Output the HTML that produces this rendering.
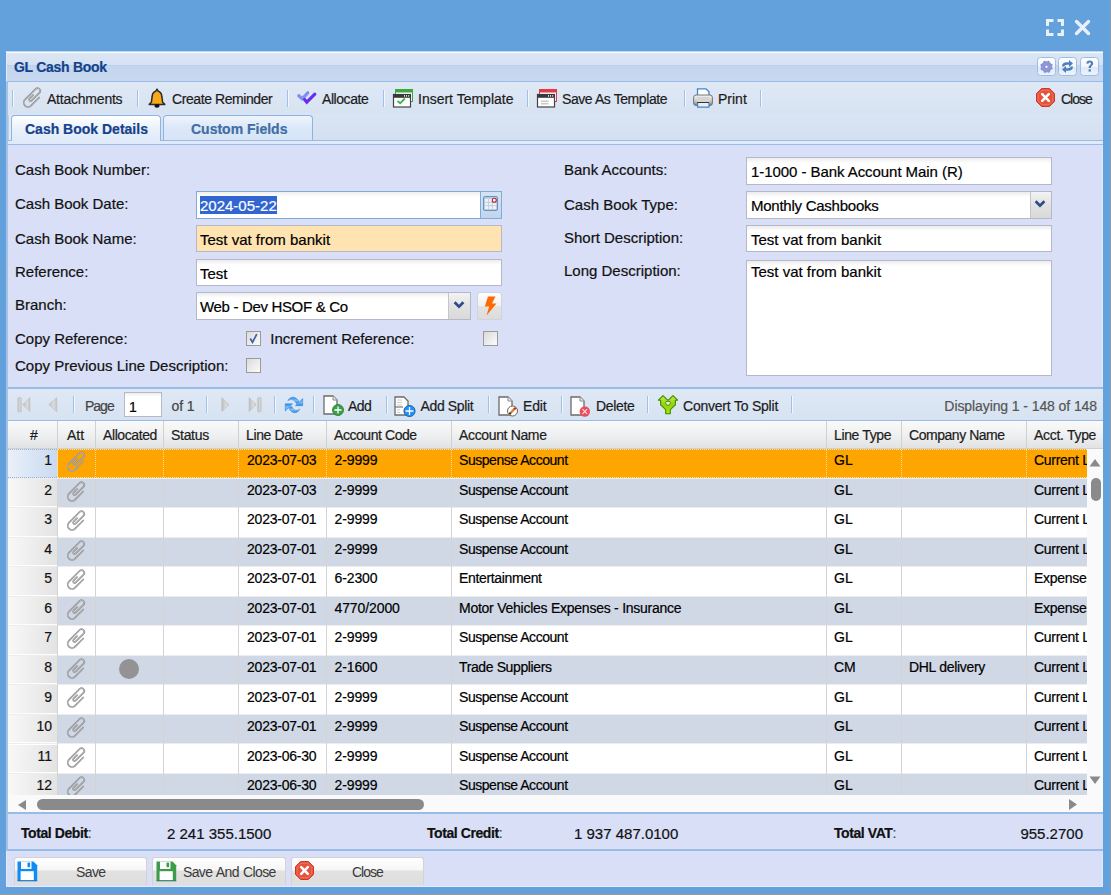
<!DOCTYPE html><html><head><meta charset="utf-8"><style>
*{box-sizing:border-box}
html,body{margin:0;padding:0}
body{width:1111px;height:895px;overflow:hidden;background:#62a1dc;font-family:"Liberation Sans",sans-serif;position:relative}
.a{position:absolute}
.t{position:absolute;white-space:nowrap;line-height:1;-webkit-text-stroke:0.2px currentColor}
svg.a{overflow:visible}
</style></head><body><div class="a" style="left:1110px;top:0px;width:1px;height:895px;background:#8f9aa6"></div>
<div class="a" style="left:0px;top:894px;width:1111px;height:1px;background:#9a9a9a"></div>
<svg class="a" style="left:1045px;top:18px" width="20" height="19" viewBox="0 0 20 19"><g fill="none" stroke="#e8f0f9" stroke-width="3" stroke-linecap="butt"><path d="M2.5 8V2.5H8.5"/><path d="M12.5 2.5H17.5V8"/><path d="M2.5 11.5V16.5H8.5"/><path d="M12.5 16.5H17.5V11.5"/></g></svg>
<svg class="a" style="left:1074px;top:19px" width="17" height="17" viewBox="0 0 17 17"><g stroke="#e8f0f9" stroke-width="3.4" stroke-linecap="round"><path d="M2.5 2.5L14.5 14.5M14.5 2.5L2.5 14.5"/></g></svg>
<div class="a" style="left:6px;top:51px;width:1097px;height:836px;background:#d8dff6;border-left:2px solid #a6c1e6;border-right:1px solid #e2e8f8;border-bottom:1px solid #e6ebfa"></div>
<div class="a" style="left:6px;top:51px;width:1097px;height:31px;background:linear-gradient(#b9d5f1 0,#b9d5f1 1px,#fbfdff 1px,#fbfdff 2px,#dbe6f4 2px,#d5e2f3 14px,#bcd2ec 14px,#bcd2ec 15px,#c3d6ee 15px,#c8d9ef 30px);border-bottom:1px solid #99bbe8;border-left:1px solid #e2ebf7"></div>
<div class="t" style="left:14px;top:60.15px;font-size:14px;font-weight:700;color:#15428b;letter-spacing:-0.29px;">GL Cash Book</div>
<svg width="0" height="0" style="position:absolute"><defs><linearGradient id="tg" x1="0" y1="0" x2="0" y2="1"><stop offset="0" stop-color="#fff"/><stop offset="0.5" stop-color="#f2f7fd"/><stop offset="0.52" stop-color="#dde9f8"/><stop offset="1" stop-color="#eef4fc"/></linearGradient></defs></svg>
<svg class="a" style="left:1037px;top:57px" width="19" height="19" viewBox="0 0 19 19"><rect x="0.5" y="0.5" width="18" height="18" rx="3" fill="url(#tg)" stroke="#9dbde8"/><g transform="translate(9.5 9.8)"><circle r="5.3" fill="#8e96d5" stroke="#7a82c8" stroke-width="0.6"/><circle r="5.6" fill="none" stroke="#7f87cc" stroke-width="1.4" stroke-dasharray="1.6 2.8" transform="rotate(8)"/><circle r="1.1" fill="#fff"/></g></svg>
<svg class="a" style="left:1058px;top:57px" width="19" height="19" viewBox="0 0 19 19"><rect x="0.5" y="0.5" width="18" height="18" rx="3" fill="url(#tg)" stroke="#9dbde8"/><g fill="#4d7fbf"><path d="M4 9.5C4 6.5 6 5.3 9 5.3H11V3L15 6.5L11 10V7.8H9C7.5 7.8 6.5 8.5 6.5 9.5Z"/><path d="M15 9.5C15 12.5 13 13.7 10 13.7H8V16L4 12.5L8 9V11.2H10C11.5 11.2 12.5 10.5 12.5 9.5Z"/></g></svg>
<svg class="a" style="left:1080px;top:57px" width="19" height="19" viewBox="0 0 19 19"><rect x="0.5" y="0.5" width="18" height="18" rx="3" fill="url(#tg)" stroke="#9dbde8"/><path d="M6.3 6.6C6.3 4.6 7.7 3.6 9.7 3.6C11.8 3.6 13.2 4.7 13.2 6.5C13.2 8.6 10.8 8.9 10.8 11H8.6C8.6 8.3 10.9 8.1 10.9 6.6C10.9 5.9 10.4 5.5 9.7 5.5C9 5.5 8.5 6 8.5 6.8Z" fill="#4f7fb8"/><rect x="8.6" y="12.3" width="2.2" height="2.3" fill="#4f7fb8"/></svg>
<div class="a" style="left:8px;top:82px;width:1095px;height:32px;background:linear-gradient(#dfe8f5,#d7e3f2)"></div>
<div class="a" style="left:12px;top:90px;width:1px;height:17px;background:#9fc0e8;box-shadow:1px 0 0 #f4f8fd"></div>
<div class="a" style="left:137px;top:90px;width:1px;height:17px;background:#9fc0e8;box-shadow:1px 0 0 #f4f8fd"></div>
<div class="a" style="left:287px;top:90px;width:1px;height:17px;background:#9fc0e8;box-shadow:1px 0 0 #f4f8fd"></div>
<div class="a" style="left:383px;top:90px;width:1px;height:17px;background:#9fc0e8;box-shadow:1px 0 0 #f4f8fd"></div>
<div class="a" style="left:527px;top:90px;width:1px;height:17px;background:#9fc0e8;box-shadow:1px 0 0 #f4f8fd"></div>
<div class="a" style="left:684px;top:90px;width:1px;height:17px;background:#9fc0e8;box-shadow:1px 0 0 #f4f8fd"></div>
<div class="a" style="left:760px;top:90px;width:1px;height:17px;background:#9fc0e8;box-shadow:1px 0 0 #f4f8fd"></div>
<div class="t" style="left:47px;top:92.15px;font-size:14px;font-weight:400;color:#1c1c1c;letter-spacing:-0.22px;">Attachments</div>
<div class="t" style="left:172px;top:92.15px;font-size:14px;font-weight:400;color:#1c1c1c;letter-spacing:-0.42px;">Create Reminder</div>
<div class="t" style="left:322px;top:92.15px;font-size:14px;font-weight:400;color:#1c1c1c;letter-spacing:-0.43px;">Allocate</div>
<div class="t" style="left:418px;top:92.15px;font-size:14px;font-weight:400;color:#1c1c1c;">Insert Template</div>
<div class="t" style="left:562px;top:92.15px;font-size:14px;font-weight:400;color:#1c1c1c;letter-spacing:-0.42px;">Save As Template</div>
<div class="t" style="left:718px;top:92.15px;font-size:14px;font-weight:400;color:#1c1c1c;">Print</div>
<div class="t" style="left:1061px;top:92.15px;font-size:14px;font-weight:400;color:#1c1c1c;letter-spacing:-1.0px;">Close</div>
<svg class="a" style="left:22px;top:88px" width="19" height="20" viewBox="0 0 19 20"><g transform="translate(10.6 10.2) rotate(45) translate(-5 -12)" fill="none" stroke-linecap="round"><path d="M3.2 9.5V14.5A1.4 1.4 0 0 0 6.0 14.5V3.4A2.7 2.7 0 0 0 0.6 3.4V18.35A4.3 4.3 0 0 0 9.2 18.35V6.8" stroke="#8a8a8a" stroke-width="1.7"/><path d="M3.2 9.5V14.5A1.4 1.4 0 0 0 6.0 14.5V3.4A2.7 2.7 0 0 0 0.6 3.4V18.35A4.3 4.3 0 0 0 9.2 18.35V6.8" stroke="#d0d0d0" stroke-width="0.55"/></g></svg>
<svg class="a" style="left:148px;top:88px" width="18" height="20" viewBox="0 0 18 20"><path d="M9 1.2L10.2 3.2C12.6 3.8 13.6 5.5 13.8 8.2L14.6 14.2L16.8 16.4H1.2L3.4 14.2L4.2 8.2C4.4 5.5 5.4 3.8 7.8 3.2Z" fill="#f7a91a" stroke="#2a2a2a" stroke-width="1.5" stroke-linejoin="round"/><ellipse cx="9" cy="18" rx="2.6" ry="1.8" fill="#111"/></svg>
<svg class="a" style="left:297px;top:91px" width="20" height="14" viewBox="0 0 20 14"><g fill="none" stroke-linecap="round" stroke-width="3.2"><path d="M1.8 4.8L5.2 7.8L10.8 1.8" stroke="#7e8ff0"/><path d="M7.6 8.5L9.8 11.2L17.8 3.2" stroke="#6a2cf0"/></g></svg>
<svg class="a" style="left:393px;top:89px" width="20" height="19" viewBox="0 0 20 19"><rect x="2.5" y="0.5" width="17" height="12" fill="#fff" stroke="#3aa83a" stroke-width="1"/><rect x="2" y="0" width="18" height="3.5" fill="#3aa83a"/><rect x="0.5" y="5.5" width="17" height="12.5" fill="#fff" stroke="#444" stroke-width="1.2"/><rect x="0" y="5" width="18" height="3.8" fill="#3a3a3a"/><g fill="#fff"><rect x="11" y="6.2" width="1" height="1.4"/><rect x="13" y="6.2" width="1" height="1.4"/><rect x="15.2" y="6.2" width="1" height="1.4"/></g><path d="M4.5 12L7.2 14.3L11.8 9.5" fill="none" stroke="#3cb54a" stroke-width="1.9"/></svg>
<svg class="a" style="left:537px;top:89px" width="20" height="19" viewBox="0 0 20 19"><rect x="2.5" y="0.5" width="17" height="12" fill="#fff" stroke="#e23a45" stroke-width="1"/><rect x="2" y="0" width="18" height="3.5" fill="#e23a45"/><rect x="0.5" y="5.5" width="17" height="12.5" fill="#fff" stroke="#444" stroke-width="1.2"/><rect x="0" y="5" width="18" height="3.8" fill="#3a3a3a"/><g fill="#fff"><rect x="11" y="6.2" width="1" height="1.4"/><rect x="13" y="6.2" width="1" height="1.4"/><rect x="15.2" y="6.2" width="1" height="1.4"/></g><g stroke="#bdbdbd" stroke-width="1.2"><path d="M4 12.2H11.5"/><path d="M4 14.8H11.5"/></g></svg>
<svg class="a" style="left:693px;top:88px" width="20" height="20" viewBox="0 0 20 20"><defs><linearGradient id="pg" x1="0" y1="0" x2="0" y2="1"><stop offset="0" stop-color="#f4f4f4"/><stop offset="0.6" stop-color="#c8c8c8"/><stop offset="1" stop-color="#777"/></linearGradient></defs><path d="M4.5 0.8H13L16 3.8V10H4.5Z" fill="#fff" stroke="#3f86d3" stroke-width="1.3"/><rect x="0.6" y="7" width="18.8" height="10.5" rx="2.5" fill="url(#pg)" stroke="#666" stroke-width="0.9"/><rect x="4" y="9" width="12" height="5" fill="#d5d5d5"/><path d="M4 14.5H16" stroke="#333" stroke-width="1"/><path d="M4.6 15L4.6 19.2H16L16 15" fill="#eee" stroke="#3f86d3" stroke-width="1.2"/></svg>
<svg class="a" style="left:1036px;top:88px" width="19" height="19" viewBox="0 0 19 19"><g transform="scale(1.0)"><path d="M5.6 0.5H13.4L18.5 5.6V13.4L13.4 18.5H5.6L0.5 13.4V5.6Z" fill="#e8503a" stroke="#c8392a" stroke-width="1"/><path d="M6.2 2.2H12.8L16.8 6.2V12.8L12.8 16.8H6.2L2.2 12.8V6.2Z" fill="none" stroke="#f08a78" stroke-width="0.8" opacity="0.8"/><path d="M6.2 6.2L12.8 12.8M12.8 6.2L6.2 12.8" stroke="#fff" stroke-width="2.6" stroke-linecap="round"/></g></svg>
<div class="a" style="left:8px;top:114px;width:1095px;height:26px;background:linear-gradient(#dae5f3,#d3e0f0)"></div>
<div class="a" style="left:8px;top:140px;width:1095px;height:1px;background:#99bbe8"></div>
<div class="a" style="left:8px;top:141px;width:1095px;height:3px;background:#e0eafa"></div>
<div class="a" style="left:8px;top:144px;width:1095px;height:1px;background:#99bbe8"></div>
<div class="a" style="left:8px;top:115px;width:3px;height:25px;background:#e2e9f2;border-left:1px solid #b9cfea"></div>
<div class="a" style="left:11px;top:115px;width:150px;height:26px;background:linear-gradient(#ffffff,#e8f0fa 14px,#dfeaf9 25px,#e0eafa);border:1px solid #8db2e3;border-bottom:none;border-radius:4px 4px 0 0"></div>
<div class="a" style="left:12px;top:140px;width:148px;height:1px;background:#e0eafa"></div>
<div class="a" style="left:163px;top:115px;width:150px;height:26px;background:linear-gradient(#eef4fc,#dae7f8 13px,#d7e5f7);border:1px solid #8db2e3;border-bottom:1px solid #99bbe8;border-radius:4px 4px 0 0"></div>
<div class="t" style="left:25px;top:122.15px;font-size:14px;font-weight:700;color:#15428b;">Cash Book Details</div>
<div class="t" style="left:191px;top:122.15px;font-size:14px;font-weight:700;color:#416da3;">Custom Fields</div>
<div class="t" style="left:15px;top:162.30px;font-size:15px;font-weight:400;color:#111;">Cash Book Number:</div>
<div class="t" style="left:15px;top:196.30px;font-size:15px;font-weight:400;color:#111;">Cash Book Date:</div>
<div class="t" style="left:15px;top:230.50px;font-size:15px;font-weight:400;color:#111;">Cash Book Name:</div>
<div class="t" style="left:15px;top:263.50px;font-size:15px;font-weight:400;color:#111;">Reference:</div>
<div class="t" style="left:15px;top:297.30px;font-size:15px;font-weight:400;color:#111;">Branch:</div>
<div class="t" style="left:15px;top:331.10px;font-size:15px;font-weight:400;color:#111;">Copy Reference:</div>
<div class="t" style="left:15px;top:358.00px;font-size:15px;font-weight:400;color:#111;">Copy Previous Line Description:</div>
<div class="t" style="left:564px;top:162.30px;font-size:15px;font-weight:400;color:#111;">Bank Accounts:</div>
<div class="t" style="left:564px;top:196.60px;font-size:15px;font-weight:400;color:#111;">Cash Book Type:</div>
<div class="t" style="left:564px;top:230.10px;font-size:15px;font-weight:400;color:#111;">Short Description:</div>
<div class="t" style="left:564px;top:262.80px;font-size:15px;font-weight:400;color:#111;">Long Description:</div>
<div class="t" style="left:270.3px;top:331.10px;font-size:15px;font-weight:400;color:#111;">Increment Reference:</div>
<div class="a" style="left:196px;top:191px;width:306px;height:28px;background:linear-gradient(#efefef 0,#fff 5px);border:1px solid #7eadd9"></div>
<div class="a" style="left:480px;top:192px;width:21px;height:26px;background:linear-gradient(#d5e3f4,#c2d5ee);border-left:1px solid #7eadd9"></div>
<svg class="a" style="left:483px;top:196px" width="15" height="15" viewBox="0 0 15 15"><rect x="0.5" y="0.5" width="14" height="14" rx="1.5" fill="#b9cde7" stroke="#6e8fb8"/><rect x="2" y="3" width="11" height="10" fill="#eef2f8"/><g stroke="#b8c4d6" stroke-width="0.8"><path d="M2 6.3H13M2 9.6H13M5.6 3V13M9.3 3V13"/></g><circle cx="11.3" cy="4.2" r="2" fill="#fff" stroke="#b0202a" stroke-width="1.1"/></svg>
<div class="a" style="left:200px;top:196px;width:77px;height:18px;background:#3165d2"></div>
<div class="t" style="left:200px;top:198.30px;font-size:15px;font-weight:400;color:#fff;">2024-05-22</div>
<div class="a" style="left:196px;top:225px;width:306px;height:27px;background:#ffe4b1;border:1px solid #b5b8c8"></div>
<div class="t" style="left:200px;top:231.80px;font-size:15px;font-weight:400;color:#000;">Test vat from bankit</div>
<div class="a" style="left:196px;top:259px;width:306px;height:27px;background:linear-gradient(#ececec 0,#fff 5px);border:1px solid #b5b8c8"></div>
<div class="t" style="left:200px;top:265.80px;font-size:15px;font-weight:400;color:#000;">Test</div>
<div class="a" style="left:196px;top:292px;width:275px;height:28px;background:linear-gradient(#ececec 0,#fff 5px);border:1px solid #b5b8c8"></div>
<div class="a" style="left:448px;top:293px;width:22px;height:26px;background:linear-gradient(#f3f3f3,#e2e2e2 50%,#d9d9d9);border-left:1px solid #c6c6c6"></div>
<svg class="a" style="left:452px;top:300px" width="14" height="10" viewBox="0 0 14 10"><path d="M2.6 2.2L7 6.6L11.4 2.2" fill="none" stroke="#2c4b88" stroke-width="2.7"/></svg>
<div class="t" style="left:200px;top:299.30px;font-size:15px;font-weight:400;color:#000;letter-spacing:-0.33px;">Web - Dev HSOF &amp; Co</div>
<div class="a" style="left:477px;top:292px;width:25px;height:28px;background:linear-gradient(#fdfdfd,#f1f1f1 50%,#e3e3e3 51%,#dcdcdc);border:1px solid #d0d3dc;border-radius:3px 3px 0 0"></div>
<svg class="a" style="left:481px;top:295px" width="17" height="22" viewBox="0 0 17 22"><path d="M7 1.5H14.5L11 8.5H15.5L5.5 20.5L8.2 11.5H3.8Z" fill="#ff6a00"/></svg>
<svg width="0" height="0" style="position:absolute"><defs><linearGradient id="cbg" x1="0" y1="0" x2="1" y2="1"><stop offset="0" stop-color="#d9d9d9"/><stop offset="1" stop-color="#fdfdfd"/></linearGradient></defs></svg>
<svg class="a" style="left:246px;top:331px" width="15" height="15" viewBox="0 0 15 15"><rect x="0.5" y="0.5" width="14" height="14" fill="url(#cbg)" stroke="#9a9a9a"/><path d="M4.2 7.5L6.5 11.2L10.8 3.2" fill="none" stroke="#3d5fa6" stroke-width="1.7"/></svg>
<svg class="a" style="left:483px;top:331px" width="15" height="15" viewBox="0 0 15 15"><rect x="0.5" y="0.5" width="14" height="14" fill="url(#cbg)" stroke="#9a9a9a"/></svg>
<svg class="a" style="left:246px;top:358px" width="15" height="15" viewBox="0 0 15 15"><rect x="0.5" y="0.5" width="14" height="14" fill="url(#cbg)" stroke="#9a9a9a"/></svg>
<div class="a" style="left:746px;top:157px;width:306px;height:28px;background:linear-gradient(#ececec 0,#fff 5px);border:1px solid #b5b8c8"></div>
<div class="t" style="left:751px;top:164.30px;font-size:15px;font-weight:400;color:#000;letter-spacing:-0.06px;">1-1000 - Bank Account Main (R)</div>
<div class="a" style="left:746px;top:191px;width:306px;height:28px;background:linear-gradient(#ececec 0,#fff 5px);border:1px solid #b5b8c8"></div>
<div class="a" style="left:1030px;top:192px;width:21px;height:26px;background:linear-gradient(#f3f3f3,#e2e2e2 50%,#d9d9d9);border-left:1px solid #c6c6c6"></div>
<svg class="a" style="left:1033px;top:199px" width="14" height="10" viewBox="0 0 14 10"><path d="M2.6 2.2L7 6.6L11.4 2.2" fill="none" stroke="#2c4b88" stroke-width="2.7"/></svg>
<div class="t" style="left:751px;top:198.30px;font-size:15px;font-weight:400;color:#000;letter-spacing:-0.25px;">Monthly Cashbooks</div>
<div class="a" style="left:746px;top:225px;width:306px;height:27px;background:linear-gradient(#ececec 0,#fff 5px);border:1px solid #b5b8c8"></div>
<div class="t" style="left:751px;top:231.80px;font-size:15px;font-weight:400;color:#000;">Test vat from bankit</div>
<div class="a" style="left:746px;top:260px;width:306px;height:116px;background:linear-gradient(#ececec 0,#fff 5px);border:1px solid #b5b8c8"></div>
<div class="t" style="left:751px;top:264.30px;font-size:15px;font-weight:400;color:#000;">Test vat from bankit</div>
<div class="a" style="left:8px;top:387px;width:1095px;height:2px;background:#99bbe8"></div>
<div class="a" style="left:8px;top:389px;width:1095px;height:32px;background:linear-gradient(#dfe8f5,#d7e3f2);border-bottom:1px solid #99bbe8"></div>
<div class="a" style="left:73px;top:396px;width:1px;height:17px;background:#9fc0e8;box-shadow:1px 0 0 #f4f8fd"></div>
<div class="a" style="left:206px;top:396px;width:1px;height:17px;background:#9fc0e8;box-shadow:1px 0 0 #f4f8fd"></div>
<div class="a" style="left:274px;top:396px;width:1px;height:17px;background:#9fc0e8;box-shadow:1px 0 0 #f4f8fd"></div>
<div class="a" style="left:313px;top:396px;width:1px;height:17px;background:#9fc0e8;box-shadow:1px 0 0 #f4f8fd"></div>
<div class="a" style="left:386px;top:396px;width:1px;height:17px;background:#9fc0e8;box-shadow:1px 0 0 #f4f8fd"></div>
<div class="a" style="left:488px;top:396px;width:1px;height:17px;background:#9fc0e8;box-shadow:1px 0 0 #f4f8fd"></div>
<div class="a" style="left:561px;top:396px;width:1px;height:17px;background:#9fc0e8;box-shadow:1px 0 0 #f4f8fd"></div>
<div class="a" style="left:647px;top:396px;width:1px;height:17px;background:#9fc0e8;box-shadow:1px 0 0 #f4f8fd"></div>
<div class="a" style="left:791px;top:396px;width:1px;height:17px;background:#9fc0e8;box-shadow:1px 0 0 #f4f8fd"></div>
<svg width="0" height="0" style="position:absolute"><defs><linearGradient id="pgr" x1="0" y1="0" x2="1" y2="0"><stop offset="0" stop-color="#bdbdbd"/><stop offset="0.6" stop-color="#dcdcdc"/><stop offset="1" stop-color="#c4c4c4"/></linearGradient></defs></svg>
<svg class="a" style="left:17px;top:397px" width="14" height="16" viewBox="0 0 14 16"><rect x="0.9" y="0.6" width="3.3" height="14.4" rx="0.9" fill="url(#pgr)" stroke="#b8b8b8" stroke-width="0.6"/><path d="M12.9 0.6V14.6L5.8 7.6Z" fill="url(#pgr)" stroke="#b6b6b6" stroke-width="0.5"/></svg>
<svg class="a" style="left:48px;top:397px" width="10" height="16" viewBox="0 0 10 16"><path d="M8.7 0.6V14.6L0.9 7.6Z" fill="url(#pgr)" stroke="#b6b6b6" stroke-width="0.5"/></svg>
<div class="t" style="left:85px;top:398.65px;font-size:14px;font-weight:400;color:#444;letter-spacing:-1.0px;">Page</div>
<div class="a" style="left:124px;top:392px;width:38px;height:25px;background:linear-gradient(#ececec 0,#fff 4px);border:1px solid #b5b8c8"></div>
<div class="t" style="left:129px;top:400.15px;font-size:14px;font-weight:400;color:#000;">1</div>
<div class="t" style="left:171.5px;top:398.65px;font-size:14px;font-weight:400;color:#444;letter-spacing:-0.09px;">of 1</div>
<svg class="a" style="left:221px;top:397px" width="10" height="16" viewBox="0 0 10 16"><path d="M0.8 0.6V14.6L7.9 7.6Z" fill="url(#pgr)" stroke="#b6b6b6" stroke-width="0.5"/></svg>
<svg class="a" style="left:248px;top:397px" width="14" height="16" viewBox="0 0 14 16"><path d="M1.1 0.6V14.6L8.2 7.6Z" fill="url(#pgr)" stroke="#b6b6b6" stroke-width="0.5"/><rect x="9.8" y="0.6" width="3.3" height="14.4" rx="0.9" fill="url(#pgr)" stroke="#b8b8b8" stroke-width="0.6"/></svg>
<svg class="a" style="left:282px;top:394px" width="24" height="22" viewBox="0 0 24 22"><defs><linearGradient id="rg" x1="0" y1="0" x2="0" y2="1"><stop offset="0" stop-color="#2a8ae6"/><stop offset="0.5" stop-color="#7cc0f6"/><stop offset="1" stop-color="#2a86e0"/></linearGradient></defs><g fill="url(#rg)" stroke="#2f86dc" stroke-width="0.5" stroke-linejoin="round"><path d="M5.8 6.8C7.5 2.2 14.5 1.2 17.6 8.6L14.2 9.6C12.6 5.4 8.6 4.6 5.8 6.8Z"/><path d="M13.4 11.7L20.7 11.7L20.7 4.6Z"/><path d="M17.8 15C16 19.8 9.5 20.5 6.5 13.4L9.8 12.4C11.5 16.6 15 17.4 17.8 15Z"/><path d="M3.2 9.8L10.6 9.8L3.2 17.1Z"/></g></svg>
<svg class="a" style="left:323px;top:395px" width="21" height="21" viewBox="0 0 21 21"><path d="M1 1H10L14 5V19H1Z" fill="#fff" stroke="#6b6b6b" stroke-width="1.3"/><path d="M10 1V5H14" fill="#eee" stroke="#8a8a8a" stroke-width="1"/><circle cx="15" cy="15" r="5.5" fill="#3aa048" stroke="#2a7a34" stroke-width="0.8"/><path d="M15 11.5V18.5M11.5 15H18.5" stroke="#fff" stroke-width="1.3"/></svg>
<div class="t" style="left:348px;top:398.65px;font-size:14px;font-weight:400;color:#1c1c1c;letter-spacing:-0.5px;">Add</div>
<svg class="a" style="left:394px;top:396px" width="22" height="21" viewBox="0 0 22 21"><path d="M1 1H10L14 5V19H1Z" fill="#fff" stroke="#6b6b6b" stroke-width="1.3"/><path d="M1 11H9" stroke="#6b6b6b" stroke-width="1.1"/><g stroke="#ccc" stroke-width="1"><path d="M3 4H8M3 6.5H8M3 9H8M3 14H6M3 16.5H6"/></g><circle cx="15.5" cy="15" r="5.6" fill="#1e90ff" stroke="#1a5d8a" stroke-width="0.9"/><path d="M15.5 11V19M11.5 15H19.5" stroke="#fff" stroke-width="1.3"/></svg>
<div class="t" style="left:420.5px;top:398.65px;font-size:14px;font-weight:400;color:#1c1c1c;letter-spacing:-0.36px;">Add Split</div>
<svg class="a" style="left:498px;top:396px" width="21" height="21" viewBox="0 0 21 21"><path d="M1 1H10L14 5V19H1Z" fill="#fff" stroke="#6b6b6b" stroke-width="1.3"/><path d="M10 1V5H14" fill="#eee" stroke="#8a8a8a" stroke-width="1"/><circle cx="14.5" cy="15" r="5" fill="#fff" stroke="#7a5a5a" stroke-width="1"/><path d="M11.8 17.8L16.8 12.6" stroke="#c08a2a" stroke-width="2.2"/><path d="M16.2 13.2L17.6 11.8" stroke="#e02020" stroke-width="2.2"/><path d="M11.6 18L12.6 16.8" stroke="#222" stroke-width="2"/></svg>
<div class="t" style="left:523px;top:398.65px;font-size:14px;font-weight:400;color:#1c1c1c;letter-spacing:-0.15px;">Edit</div>
<svg class="a" style="left:570px;top:396px" width="21" height="21" viewBox="0 0 21 21"><path d="M1 1H10L14 5V19H1Z" fill="#fff" stroke="#6b6b6b" stroke-width="1.3"/><path d="M10 1V5H14" fill="#eee" stroke="#8a8a8a" stroke-width="1"/><circle cx="14.8" cy="15.5" r="5.2" fill="#e8505a"/><path d="M12.5 13.2L17.1 17.8M17.1 13.2L12.5 17.8" stroke="#fde" stroke-width="1.1"/></svg>
<div class="t" style="left:596px;top:398.65px;font-size:14px;font-weight:400;color:#1c1c1c;letter-spacing:-0.34px;">Delete</div>
<svg class="a" style="left:658px;top:395px" width="20" height="20" viewBox="0 0 20 20"><defs><linearGradient id="yg" x1="0" y1="0" x2="0" y2="1"><stop offset="0" stop-color="#c2e85a"/><stop offset="0.5" stop-color="#94d400"/><stop offset="1" stop-color="#a6ea00"/></linearGradient></defs><path d="M5 0.6L9.9 5.3L10 5.3L15 0.6L19.6 5.2H17.4V9.8L12.3 14.6V18.8H7.7V14.6L2.6 9.8V5.2H0.4Z" fill="url(#yg)" stroke="#3f8a00" stroke-width="1.1" stroke-linejoin="round"/><path d="M10 10.6C8.2 9.4 7.6 8.6 7.6 7.7C7.6 6.9 8.2 6.4 8.9 6.4C9.4 6.4 9.8 6.7 10 7C10.2 6.7 10.6 6.4 11.1 6.4C11.8 6.4 12.4 6.9 12.4 7.7C12.4 8.6 11.8 9.4 10 10.6Z" fill="#e3ebf4" stroke="#3f8a00" stroke-width="1"/></svg>
<div class="t" style="left:683px;top:398.65px;font-size:14px;font-weight:400;color:#1c1c1c;letter-spacing:-0.22px;">Convert To Split</div>
<div class="t" style="right:14px;top:398.65px;font-size:14px;font-weight:400;color:#555;letter-spacing:-0.09px;">Displaying 1 - 148 of 148</div>
<div class="a" style="left:8px;top:421px;width:1095px;height:28px;background:linear-gradient(#fafafa,#eeeff0 55%,#e1e2e4);border-bottom:1px solid #d0d0d0"></div>
<div class="a" style="left:57px;top:421px;width:1px;height:28px;background:#d0d0d0"></div>
<div class="a" style="left:95px;top:421px;width:1px;height:28px;background:#d0d0d0"></div>
<div class="a" style="left:163px;top:421px;width:1px;height:28px;background:#d0d0d0"></div>
<div class="a" style="left:238px;top:421px;width:1px;height:28px;background:#d0d0d0"></div>
<div class="a" style="left:326px;top:421px;width:1px;height:28px;background:#d0d0d0"></div>
<div class="a" style="left:451px;top:421px;width:1px;height:28px;background:#d0d0d0"></div>
<div class="a" style="left:826px;top:421px;width:1px;height:28px;background:#d0d0d0"></div>
<div class="a" style="left:901px;top:421px;width:1px;height:28px;background:#d0d0d0"></div>
<div class="a" style="left:1026px;top:421px;width:1px;height:28px;background:#d0d0d0"></div>
<div class="t" style="left:30px;top:427.65px;font-size:14px;font-weight:400;color:#1c1c1c;">#</div>
<div class="t" style="left:67px;top:427.65px;font-size:14px;font-weight:400;color:#1c1c1c;">Att</div>
<div class="t" style="left:103px;top:427.65px;font-size:14px;font-weight:400;color:#1c1c1c;letter-spacing:-0.41px;">Allocated</div>
<div class="t" style="left:171px;top:427.65px;font-size:14px;font-weight:400;color:#1c1c1c;letter-spacing:-0.3px;">Status</div>
<div class="t" style="left:246px;top:427.65px;font-size:14px;font-weight:400;color:#1c1c1c;letter-spacing:-0.36px;">Line Date</div>
<div class="t" style="left:334px;top:427.65px;font-size:14px;font-weight:400;color:#1c1c1c;letter-spacing:-0.44px;">Account Code</div>
<div class="t" style="left:459px;top:427.65px;font-size:14px;font-weight:400;color:#1c1c1c;letter-spacing:-0.35px;">Account Name</div>
<div class="t" style="left:834px;top:427.65px;font-size:14px;font-weight:400;color:#1c1c1c;letter-spacing:-0.37px;">Line Type</div>
<div class="t" style="left:909px;top:427.65px;font-size:14px;font-weight:400;color:#1c1c1c;letter-spacing:-0.46px;">Company Name</div>
<div class="t" style="left:1034px;top:427.65px;font-size:14px;font-weight:400;color:#1c1c1c;letter-spacing:-0.3px;">Acct. Type</div>
<div class="a" style="left:8px;top:449px;width:1079px;height:346px;overflow:hidden;background:#fff">
<div class="a" style="left:0;top:0.00px;width:1095px;height:29.55px;background:#ffa500;border-bottom:1px solid #ededed"></div>
<div class="a" style="left:0;top:0.00px;width:49px;height:28.55px;background:linear-gradient(90deg,#e9f0fa,#c9daf0);border-top:1px dotted #9fb0c8;border-bottom:1px dotted #9fb0c8"></div>
<div class="a" style="left:49px;top:0.00px;width:1046px;height:28.55px;border:1px dotted #fbe3b8;border-right:none"></div>
<div class="t" style="right:1035px;top:4.15px;font-size:14px;color:#111">1</div>
<svg class="a"  style="left:58px;top:3.0px" width="19" height="20" viewBox="0 0 19 20"><g transform="translate(10.6 10.2) rotate(45) translate(-5 -12)" fill="none" stroke-linecap="round"><path d="M3.2 9.5V14.5A1.4 1.4 0 0 0 6.0 14.5V3.4A2.7 2.7 0 0 0 0.6 3.4V18.35A4.3 4.3 0 0 0 9.2 18.35V6.8" stroke="#8c8c8c" stroke-width="1.7"/><path d="M3.2 9.5V14.5A1.4 1.4 0 0 0 6.0 14.5V3.4A2.7 2.7 0 0 0 0.6 3.4V18.35A4.3 4.3 0 0 0 9.2 18.35V6.8" stroke="#d0d0d0" stroke-width="0.55"/></g></svg>
<div class="t" style="left:239px;top:4.15px;font-size:14px;color:#000;letter-spacing:-0.22px">2023-07-03</div>
<div class="t" style="left:326.5px;top:4.15px;font-size:14px;color:#000;letter-spacing:-0.1px">2-9999</div>
<div class="t" style="left:451px;top:4.15px;font-size:14px;color:#000;letter-spacing:-0.46px">Suspense Account</div>
<div class="t" style="left:826px;top:4.15px;font-size:14px;color:#000">GL</div>
<div class="t" style="left:1026px;top:4.15px;font-size:14px;color:#000;letter-spacing:-0.3px">Current L</div>
<div class="a" style="left:0;top:29.55px;width:1095px;height:29.55px;background:#d0d8e6;border-bottom:1px solid #ededed"></div>
<div class="a" style="left:0;top:29.55px;width:49px;height:28.55px;background:linear-gradient(90deg,#f8f8f8,#e3e3e3);border-bottom:1px solid #fdfdfd"></div>
<div class="t" style="right:1035px;top:33.70px;font-size:14px;color:#111">2</div>
<svg class="a"  style="left:58px;top:32.55px" width="19" height="20" viewBox="0 0 19 20"><g transform="translate(10.6 10.2) rotate(45) translate(-5 -12)" fill="none" stroke-linecap="round"><path d="M3.2 9.5V14.5A1.4 1.4 0 0 0 6.0 14.5V3.4A2.7 2.7 0 0 0 0.6 3.4V18.35A4.3 4.3 0 0 0 9.2 18.35V6.8" stroke="#8c8c8c" stroke-width="1.7"/><path d="M3.2 9.5V14.5A1.4 1.4 0 0 0 6.0 14.5V3.4A2.7 2.7 0 0 0 0.6 3.4V18.35A4.3 4.3 0 0 0 9.2 18.35V6.8" stroke="#d0d0d0" stroke-width="0.55"/></g></svg>
<div class="t" style="left:239px;top:33.70px;font-size:14px;color:#000;letter-spacing:-0.22px">2023-07-03</div>
<div class="t" style="left:326.5px;top:33.70px;font-size:14px;color:#000;letter-spacing:-0.1px">2-9999</div>
<div class="t" style="left:451px;top:33.70px;font-size:14px;color:#000;letter-spacing:-0.46px">Suspense Account</div>
<div class="t" style="left:826px;top:33.70px;font-size:14px;color:#000">GL</div>
<div class="t" style="left:1026px;top:33.70px;font-size:14px;color:#000;letter-spacing:-0.3px">Current L</div>
<div class="a" style="left:0;top:59.10px;width:1095px;height:29.55px;background:#ffffff;border-bottom:1px solid #ededed"></div>
<div class="a" style="left:0;top:59.10px;width:49px;height:28.55px;background:linear-gradient(90deg,#f8f8f8,#e3e3e3);border-bottom:1px solid #fdfdfd"></div>
<div class="t" style="right:1035px;top:63.25px;font-size:14px;color:#111">3</div>
<svg class="a"  style="left:58px;top:62.1px" width="19" height="20" viewBox="0 0 19 20"><g transform="translate(10.6 10.2) rotate(45) translate(-5 -12)" fill="none" stroke-linecap="round"><path d="M3.2 9.5V14.5A1.4 1.4 0 0 0 6.0 14.5V3.4A2.7 2.7 0 0 0 0.6 3.4V18.35A4.3 4.3 0 0 0 9.2 18.35V6.8" stroke="#8c8c8c" stroke-width="1.7"/><path d="M3.2 9.5V14.5A1.4 1.4 0 0 0 6.0 14.5V3.4A2.7 2.7 0 0 0 0.6 3.4V18.35A4.3 4.3 0 0 0 9.2 18.35V6.8" stroke="#d0d0d0" stroke-width="0.55"/></g></svg>
<div class="t" style="left:239px;top:63.25px;font-size:14px;color:#000;letter-spacing:-0.22px">2023-07-01</div>
<div class="t" style="left:326.5px;top:63.25px;font-size:14px;color:#000;letter-spacing:-0.1px">2-9999</div>
<div class="t" style="left:451px;top:63.25px;font-size:14px;color:#000;letter-spacing:-0.46px">Suspense Account</div>
<div class="t" style="left:826px;top:63.25px;font-size:14px;color:#000">GL</div>
<div class="t" style="left:1026px;top:63.25px;font-size:14px;color:#000;letter-spacing:-0.3px">Current L</div>
<div class="a" style="left:0;top:88.65px;width:1095px;height:29.55px;background:#d0d8e6;border-bottom:1px solid #ededed"></div>
<div class="a" style="left:0;top:88.65px;width:49px;height:28.55px;background:linear-gradient(90deg,#f8f8f8,#e3e3e3);border-bottom:1px solid #fdfdfd"></div>
<div class="t" style="right:1035px;top:92.80px;font-size:14px;color:#111">4</div>
<svg class="a"  style="left:58px;top:91.65px" width="19" height="20" viewBox="0 0 19 20"><g transform="translate(10.6 10.2) rotate(45) translate(-5 -12)" fill="none" stroke-linecap="round"><path d="M3.2 9.5V14.5A1.4 1.4 0 0 0 6.0 14.5V3.4A2.7 2.7 0 0 0 0.6 3.4V18.35A4.3 4.3 0 0 0 9.2 18.35V6.8" stroke="#8c8c8c" stroke-width="1.7"/><path d="M3.2 9.5V14.5A1.4 1.4 0 0 0 6.0 14.5V3.4A2.7 2.7 0 0 0 0.6 3.4V18.35A4.3 4.3 0 0 0 9.2 18.35V6.8" stroke="#d0d0d0" stroke-width="0.55"/></g></svg>
<div class="t" style="left:239px;top:92.80px;font-size:14px;color:#000;letter-spacing:-0.22px">2023-07-01</div>
<div class="t" style="left:326.5px;top:92.80px;font-size:14px;color:#000;letter-spacing:-0.1px">2-9999</div>
<div class="t" style="left:451px;top:92.80px;font-size:14px;color:#000;letter-spacing:-0.46px">Suspense Account</div>
<div class="t" style="left:826px;top:92.80px;font-size:14px;color:#000">GL</div>
<div class="t" style="left:1026px;top:92.80px;font-size:14px;color:#000;letter-spacing:-0.3px">Current L</div>
<div class="a" style="left:0;top:118.20px;width:1095px;height:29.55px;background:#ffffff;border-bottom:1px solid #ededed"></div>
<div class="a" style="left:0;top:118.20px;width:49px;height:28.55px;background:linear-gradient(90deg,#f8f8f8,#e3e3e3);border-bottom:1px solid #fdfdfd"></div>
<div class="t" style="right:1035px;top:122.35px;font-size:14px;color:#111">5</div>
<svg class="a"  style="left:58px;top:121.2px" width="19" height="20" viewBox="0 0 19 20"><g transform="translate(10.6 10.2) rotate(45) translate(-5 -12)" fill="none" stroke-linecap="round"><path d="M3.2 9.5V14.5A1.4 1.4 0 0 0 6.0 14.5V3.4A2.7 2.7 0 0 0 0.6 3.4V18.35A4.3 4.3 0 0 0 9.2 18.35V6.8" stroke="#8c8c8c" stroke-width="1.7"/><path d="M3.2 9.5V14.5A1.4 1.4 0 0 0 6.0 14.5V3.4A2.7 2.7 0 0 0 0.6 3.4V18.35A4.3 4.3 0 0 0 9.2 18.35V6.8" stroke="#d0d0d0" stroke-width="0.55"/></g></svg>
<div class="t" style="left:239px;top:122.35px;font-size:14px;color:#000;letter-spacing:-0.22px">2023-07-01</div>
<div class="t" style="left:326.5px;top:122.35px;font-size:14px;color:#000;letter-spacing:-0.1px">6-2300</div>
<div class="t" style="left:451px;top:122.35px;font-size:14px;color:#000;letter-spacing:-0.35px">Entertainment</div>
<div class="t" style="left:826px;top:122.35px;font-size:14px;color:#000">GL</div>
<div class="t" style="left:1026px;top:122.35px;font-size:14px;color:#000;letter-spacing:-0.3px">Expenses</div>
<div class="a" style="left:0;top:147.75px;width:1095px;height:29.55px;background:#d0d8e6;border-bottom:1px solid #ededed"></div>
<div class="a" style="left:0;top:147.75px;width:49px;height:28.55px;background:linear-gradient(90deg,#f8f8f8,#e3e3e3);border-bottom:1px solid #fdfdfd"></div>
<div class="t" style="right:1035px;top:151.90px;font-size:14px;color:#111">6</div>
<svg class="a"  style="left:58px;top:150.75px" width="19" height="20" viewBox="0 0 19 20"><g transform="translate(10.6 10.2) rotate(45) translate(-5 -12)" fill="none" stroke-linecap="round"><path d="M3.2 9.5V14.5A1.4 1.4 0 0 0 6.0 14.5V3.4A2.7 2.7 0 0 0 0.6 3.4V18.35A4.3 4.3 0 0 0 9.2 18.35V6.8" stroke="#8c8c8c" stroke-width="1.7"/><path d="M3.2 9.5V14.5A1.4 1.4 0 0 0 6.0 14.5V3.4A2.7 2.7 0 0 0 0.6 3.4V18.35A4.3 4.3 0 0 0 9.2 18.35V6.8" stroke="#d0d0d0" stroke-width="0.55"/></g></svg>
<div class="t" style="left:239px;top:151.90px;font-size:14px;color:#000;letter-spacing:-0.22px">2023-07-01</div>
<div class="t" style="left:326.5px;top:151.90px;font-size:14px;color:#000;letter-spacing:-0.1px">4770/2000</div>
<div class="t" style="left:451px;top:151.90px;font-size:14px;color:#000;letter-spacing:-0.25px">Motor Vehicles Expenses - Insurance</div>
<div class="t" style="left:826px;top:151.90px;font-size:14px;color:#000">GL</div>
<div class="t" style="left:1026px;top:151.90px;font-size:14px;color:#000;letter-spacing:-0.3px">Expenses</div>
<div class="a" style="left:0;top:177.30px;width:1095px;height:29.55px;background:#ffffff;border-bottom:1px solid #ededed"></div>
<div class="a" style="left:0;top:177.30px;width:49px;height:28.55px;background:linear-gradient(90deg,#f8f8f8,#e3e3e3);border-bottom:1px solid #fdfdfd"></div>
<div class="t" style="right:1035px;top:181.45px;font-size:14px;color:#111">7</div>
<svg class="a"  style="left:58px;top:180.3px" width="19" height="20" viewBox="0 0 19 20"><g transform="translate(10.6 10.2) rotate(45) translate(-5 -12)" fill="none" stroke-linecap="round"><path d="M3.2 9.5V14.5A1.4 1.4 0 0 0 6.0 14.5V3.4A2.7 2.7 0 0 0 0.6 3.4V18.35A4.3 4.3 0 0 0 9.2 18.35V6.8" stroke="#8c8c8c" stroke-width="1.7"/><path d="M3.2 9.5V14.5A1.4 1.4 0 0 0 6.0 14.5V3.4A2.7 2.7 0 0 0 0.6 3.4V18.35A4.3 4.3 0 0 0 9.2 18.35V6.8" stroke="#d0d0d0" stroke-width="0.55"/></g></svg>
<div class="t" style="left:239px;top:181.45px;font-size:14px;color:#000;letter-spacing:-0.22px">2023-07-01</div>
<div class="t" style="left:326.5px;top:181.45px;font-size:14px;color:#000;letter-spacing:-0.1px">2-9999</div>
<div class="t" style="left:451px;top:181.45px;font-size:14px;color:#000;letter-spacing:-0.46px">Suspense Account</div>
<div class="t" style="left:826px;top:181.45px;font-size:14px;color:#000">GL</div>
<div class="t" style="left:1026px;top:181.45px;font-size:14px;color:#000;letter-spacing:-0.3px">Current L</div>
<div class="a" style="left:0;top:206.85px;width:1095px;height:29.55px;background:#d0d8e6;border-bottom:1px solid #ededed"></div>
<div class="a" style="left:0;top:206.85px;width:49px;height:28.55px;background:linear-gradient(90deg,#f8f8f8,#e3e3e3);border-bottom:1px solid #fdfdfd"></div>
<div class="t" style="right:1035px;top:211.00px;font-size:14px;color:#111">8</div>
<svg class="a"  style="left:58px;top:209.85px" width="19" height="20" viewBox="0 0 19 20"><g transform="translate(10.6 10.2) rotate(45) translate(-5 -12)" fill="none" stroke-linecap="round"><path d="M3.2 9.5V14.5A1.4 1.4 0 0 0 6.0 14.5V3.4A2.7 2.7 0 0 0 0.6 3.4V18.35A4.3 4.3 0 0 0 9.2 18.35V6.8" stroke="#8c8c8c" stroke-width="1.7"/><path d="M3.2 9.5V14.5A1.4 1.4 0 0 0 6.0 14.5V3.4A2.7 2.7 0 0 0 0.6 3.4V18.35A4.3 4.3 0 0 0 9.2 18.35V6.8" stroke="#d0d0d0" stroke-width="0.55"/></g></svg>
<div class="t" style="left:239px;top:211.00px;font-size:14px;color:#000;letter-spacing:-0.22px">2023-07-01</div>
<div class="t" style="left:326.5px;top:211.00px;font-size:14px;color:#000;letter-spacing:-0.1px">2-1600</div>
<div class="t" style="left:451px;top:211.00px;font-size:14px;color:#000;letter-spacing:-0.38px">Trade Suppliers</div>
<div class="t" style="left:826px;top:211.00px;font-size:14px;color:#000">CM</div>
<div class="t" style="left:901px;top:211.00px;font-size:14px;color:#000;letter-spacing:-0.3px">DHL delivery</div>
<div class="t" style="left:1026px;top:211.00px;font-size:14px;color:#000;letter-spacing:-0.3px">Current L</div>
<div class="a" style="left:111px;top:209.85px;width:20px;height:20px;border-radius:50%;background:#949294"></div>
<div class="a" style="left:0;top:236.40px;width:1095px;height:29.55px;background:#ffffff;border-bottom:1px solid #ededed"></div>
<div class="a" style="left:0;top:236.40px;width:49px;height:28.55px;background:linear-gradient(90deg,#f8f8f8,#e3e3e3);border-bottom:1px solid #fdfdfd"></div>
<div class="t" style="right:1035px;top:240.55px;font-size:14px;color:#111">9</div>
<svg class="a"  style="left:58px;top:239.4px" width="19" height="20" viewBox="0 0 19 20"><g transform="translate(10.6 10.2) rotate(45) translate(-5 -12)" fill="none" stroke-linecap="round"><path d="M3.2 9.5V14.5A1.4 1.4 0 0 0 6.0 14.5V3.4A2.7 2.7 0 0 0 0.6 3.4V18.35A4.3 4.3 0 0 0 9.2 18.35V6.8" stroke="#8c8c8c" stroke-width="1.7"/><path d="M3.2 9.5V14.5A1.4 1.4 0 0 0 6.0 14.5V3.4A2.7 2.7 0 0 0 0.6 3.4V18.35A4.3 4.3 0 0 0 9.2 18.35V6.8" stroke="#d0d0d0" stroke-width="0.55"/></g></svg>
<div class="t" style="left:239px;top:240.55px;font-size:14px;color:#000;letter-spacing:-0.22px">2023-07-01</div>
<div class="t" style="left:326.5px;top:240.55px;font-size:14px;color:#000;letter-spacing:-0.1px">2-9999</div>
<div class="t" style="left:451px;top:240.55px;font-size:14px;color:#000;letter-spacing:-0.46px">Suspense Account</div>
<div class="t" style="left:826px;top:240.55px;font-size:14px;color:#000">GL</div>
<div class="t" style="left:1026px;top:240.55px;font-size:14px;color:#000;letter-spacing:-0.3px">Current L</div>
<div class="a" style="left:0;top:265.95px;width:1095px;height:29.55px;background:#d0d8e6;border-bottom:1px solid #ededed"></div>
<div class="a" style="left:0;top:265.95px;width:49px;height:28.55px;background:linear-gradient(90deg,#f8f8f8,#e3e3e3);border-bottom:1px solid #fdfdfd"></div>
<div class="t" style="right:1035px;top:270.10px;font-size:14px;color:#111">10</div>
<svg class="a"  style="left:58px;top:268.95px" width="19" height="20" viewBox="0 0 19 20"><g transform="translate(10.6 10.2) rotate(45) translate(-5 -12)" fill="none" stroke-linecap="round"><path d="M3.2 9.5V14.5A1.4 1.4 0 0 0 6.0 14.5V3.4A2.7 2.7 0 0 0 0.6 3.4V18.35A4.3 4.3 0 0 0 9.2 18.35V6.8" stroke="#8c8c8c" stroke-width="1.7"/><path d="M3.2 9.5V14.5A1.4 1.4 0 0 0 6.0 14.5V3.4A2.7 2.7 0 0 0 0.6 3.4V18.35A4.3 4.3 0 0 0 9.2 18.35V6.8" stroke="#d0d0d0" stroke-width="0.55"/></g></svg>
<div class="t" style="left:239px;top:270.10px;font-size:14px;color:#000;letter-spacing:-0.22px">2023-07-01</div>
<div class="t" style="left:326.5px;top:270.10px;font-size:14px;color:#000;letter-spacing:-0.1px">2-9999</div>
<div class="t" style="left:451px;top:270.10px;font-size:14px;color:#000;letter-spacing:-0.46px">Suspense Account</div>
<div class="t" style="left:826px;top:270.10px;font-size:14px;color:#000">GL</div>
<div class="t" style="left:1026px;top:270.10px;font-size:14px;color:#000;letter-spacing:-0.3px">Current L</div>
<div class="a" style="left:0;top:295.50px;width:1095px;height:29.55px;background:#ffffff;border-bottom:1px solid #ededed"></div>
<div class="a" style="left:0;top:295.50px;width:49px;height:28.55px;background:linear-gradient(90deg,#f8f8f8,#e3e3e3);border-bottom:1px solid #fdfdfd"></div>
<div class="t" style="right:1035px;top:299.65px;font-size:14px;color:#111">11</div>
<svg class="a"  style="left:58px;top:298.5px" width="19" height="20" viewBox="0 0 19 20"><g transform="translate(10.6 10.2) rotate(45) translate(-5 -12)" fill="none" stroke-linecap="round"><path d="M3.2 9.5V14.5A1.4 1.4 0 0 0 6.0 14.5V3.4A2.7 2.7 0 0 0 0.6 3.4V18.35A4.3 4.3 0 0 0 9.2 18.35V6.8" stroke="#8c8c8c" stroke-width="1.7"/><path d="M3.2 9.5V14.5A1.4 1.4 0 0 0 6.0 14.5V3.4A2.7 2.7 0 0 0 0.6 3.4V18.35A4.3 4.3 0 0 0 9.2 18.35V6.8" stroke="#d0d0d0" stroke-width="0.55"/></g></svg>
<div class="t" style="left:239px;top:299.65px;font-size:14px;color:#000;letter-spacing:-0.22px">2023-06-30</div>
<div class="t" style="left:326.5px;top:299.65px;font-size:14px;color:#000;letter-spacing:-0.1px">2-9999</div>
<div class="t" style="left:451px;top:299.65px;font-size:14px;color:#000;letter-spacing:-0.46px">Suspense Account</div>
<div class="t" style="left:826px;top:299.65px;font-size:14px;color:#000">GL</div>
<div class="t" style="left:1026px;top:299.65px;font-size:14px;color:#000;letter-spacing:-0.3px">Current L</div>
<div class="a" style="left:0;top:325.05px;width:1095px;height:29.55px;background:#d0d8e6;border-bottom:1px solid #ededed"></div>
<div class="a" style="left:0;top:325.05px;width:49px;height:28.55px;background:linear-gradient(90deg,#f8f8f8,#e3e3e3);border-bottom:1px solid #fdfdfd"></div>
<div class="t" style="right:1035px;top:329.20px;font-size:14px;color:#111">12</div>
<svg class="a"  style="left:58px;top:328.05px" width="19" height="20" viewBox="0 0 19 20"><g transform="translate(10.6 10.2) rotate(45) translate(-5 -12)" fill="none" stroke-linecap="round"><path d="M3.2 9.5V14.5A1.4 1.4 0 0 0 6.0 14.5V3.4A2.7 2.7 0 0 0 0.6 3.4V18.35A4.3 4.3 0 0 0 9.2 18.35V6.8" stroke="#8c8c8c" stroke-width="1.7"/><path d="M3.2 9.5V14.5A1.4 1.4 0 0 0 6.0 14.5V3.4A2.7 2.7 0 0 0 0.6 3.4V18.35A4.3 4.3 0 0 0 9.2 18.35V6.8" stroke="#d0d0d0" stroke-width="0.55"/></g></svg>
<div class="t" style="left:239px;top:329.20px;font-size:14px;color:#000;letter-spacing:-0.22px">2023-06-30</div>
<div class="t" style="left:326.5px;top:329.20px;font-size:14px;color:#000;letter-spacing:-0.1px">2-9999</div>
<div class="t" style="left:451px;top:329.20px;font-size:14px;color:#000;letter-spacing:-0.46px">Suspense Account</div>
<div class="t" style="left:826px;top:329.20px;font-size:14px;color:#000">GL</div>
<div class="t" style="left:1026px;top:329.20px;font-size:14px;color:#000;letter-spacing:-0.3px">Current L</div>
<div class="a" style="left:49px;top:29.55px;width:1px;height:317px;background:#d4d4d4"></div>
<div class="a" style="left:49px;top:1px;width:0;height:27px;border-left:1px dotted #f3d9a8"></div>
<div class="a" style="left:87px;top:29.55px;width:1px;height:317px;background:#d4d4d4"></div>
<div class="a" style="left:87px;top:1px;width:0;height:27px;border-left:1px dotted #f3d9a8"></div>
<div class="a" style="left:155px;top:29.55px;width:1px;height:317px;background:#d4d4d4"></div>
<div class="a" style="left:155px;top:1px;width:0;height:27px;border-left:1px dotted #f3d9a8"></div>
<div class="a" style="left:230px;top:29.55px;width:1px;height:317px;background:#d4d4d4"></div>
<div class="a" style="left:230px;top:1px;width:0;height:27px;border-left:1px dotted #f3d9a8"></div>
<div class="a" style="left:318px;top:29.55px;width:1px;height:317px;background:#d4d4d4"></div>
<div class="a" style="left:318px;top:1px;width:0;height:27px;border-left:1px dotted #f3d9a8"></div>
<div class="a" style="left:443px;top:29.55px;width:1px;height:317px;background:#d4d4d4"></div>
<div class="a" style="left:443px;top:1px;width:0;height:27px;border-left:1px dotted #f3d9a8"></div>
<div class="a" style="left:818px;top:29.55px;width:1px;height:317px;background:#d4d4d4"></div>
<div class="a" style="left:818px;top:1px;width:0;height:27px;border-left:1px dotted #f3d9a8"></div>
<div class="a" style="left:893px;top:29.55px;width:1px;height:317px;background:#d4d4d4"></div>
<div class="a" style="left:893px;top:1px;width:0;height:27px;border-left:1px dotted #f3d9a8"></div>
<div class="a" style="left:1018px;top:29.55px;width:1px;height:317px;background:#d4d4d4"></div>
<div class="a" style="left:1018px;top:1px;width:0;height:27px;border-left:1px dotted #f3d9a8"></div>
</div>
<div class="a" style="left:1087px;top:449px;width:16px;height:346px;background:#fafafa"></div>
<svg class="a" style="left:1089px;top:458px" width="12" height="9" viewBox="0 0 12 9"><path d="M0.5 8.5L6 1L11.5 8.5Z" fill="#8a8a8a"/></svg>
<div class="a" style="left:1091px;top:478px;width:10px;height:23px;background:#8a8a8a;border-radius:5px"></div>
<svg class="a" style="left:1089px;top:776px" width="12" height="9" viewBox="0 0 12 9"><path d="M0.5 0.5L6 8L11.5 0.5Z" fill="#8a8a8a"/></svg>
<div class="a" style="left:8px;top:795px;width:1095px;height:17px;background:#fafafa"></div>
<svg class="a" style="left:17px;top:799px" width="10" height="12" viewBox="0 0 10 12"><path d="M9 1V11L1 6Z" fill="#8a8a8a"/></svg>
<div class="a" style="left:37px;top:799px;width:387px;height:11px;background:#8a8a8a;border-radius:6px"></div>
<svg class="a" style="left:1068px;top:798px" width="10" height="13" viewBox="0 0 10 13"><path d="M1 1V12L9 6.5Z" fill="#8a8a8a"/></svg>
<div class="a" style="left:8px;top:812px;width:1095px;height:2px;background:#99bbe8"></div>
<div class="a" style="left:8px;top:814px;width:1095px;height:35px;background:#d8dff6"></div>
<div class="t" style="left:21px;top:826.15px;font-size:14px;font-weight:700;color:#111;letter-spacing:-0.42px;">Total Debit<span style="font-weight:400;color:#444">:</span></div>
<div class="t" style="left:167px;top:825.80px;font-size:15px;font-weight:400;color:#111;">2 241 355.1500</div>
<div class="t" style="left:427px;top:826.15px;font-size:14px;font-weight:700;color:#111;letter-spacing:-0.42px;">Total Credit<span style="font-weight:400;color:#444">:</span></div>
<div class="t" style="left:574px;top:825.80px;font-size:15px;font-weight:400;color:#111;">1 937 487.0100</div>
<div class="t" style="left:834px;top:826.15px;font-size:14px;font-weight:700;color:#111;letter-spacing:-0.42px;">Total VAT<span style="font-weight:400;color:#444">:</span></div>
<div class="t" style="right:28px;top:826.10px;font-size:15px;font-weight:400;color:#111;">955.2700</div>
<div class="a" style="left:8px;top:849px;width:1095px;height:2px;background:#99bbe8"></div>
<div class="a" style="left:6px;top:851px;width:2px;height:36px;background:#d8dff6;border-left:1px solid #e4e9f9"></div>
<div class="a" style="left:14px;top:857px;width:133px;height:28px;background:linear-gradient(#ffffff,#f6f6f6 12px,#e1e1e1 13px,#dedede);border:1px solid #d3d3d3;border-bottom:none;border-radius:3px 3px 0 0"></div>
<div class="a" style="left:152px;top:857px;width:134px;height:28px;background:linear-gradient(#ffffff,#f6f6f6 12px,#e1e1e1 13px,#dedede);border:1px solid #d3d3d3;border-bottom:none;border-radius:3px 3px 0 0"></div>
<div class="a" style="left:291px;top:857px;width:133px;height:28px;background:linear-gradient(#ffffff,#f6f6f6 12px,#e1e1e1 13px,#dedede);border:1px solid #d3d3d3;border-bottom:none;border-radius:3px 3px 0 0"></div>
<svg class="a" style="left:17px;top:861px" width="21" height="21" viewBox="0 0 21 21"><path d="M0.5 0.5H16.5L20.2 4.2V20.2H0.5Z" fill="#0d8cf7"/><rect x="4" y="0.5" width="10.5" height="7.5" fill="#fafafa"/><rect x="10.5" y="1.5" width="2.6" height="4.8" rx="1" fill="#0d8cf7"/><rect x="3.6" y="10.2" width="13.2" height="9" fill="#fff"/><rect x="0.5" y="19.2" width="19.7" height="1" fill="#1d5f9a" opacity="0.5"/></svg>
<svg class="a" style="left:156px;top:861px" width="21" height="21" viewBox="0 0 21 21"><path d="M0.5 0.5H16.5L20.2 4.2V20.2H0.5Z" fill="#3c9c4a"/><rect x="4" y="0.5" width="10.5" height="7.5" fill="#fafafa"/><rect x="10.5" y="1.5" width="2.6" height="4.8" rx="1" fill="#3c9c4a"/><rect x="3.6" y="10.2" width="13.2" height="9" fill="#fff"/><rect x="0.5" y="19.2" width="19.7" height="1" fill="#1d5f9a" opacity="0.5"/></svg>
<svg class="a" style="left:295px;top:861px" width="19" height="19" viewBox="0 0 19 19"><g transform="scale(1.0)"><path d="M5.6 0.5H13.4L18.5 5.6V13.4L13.4 18.5H5.6L0.5 13.4V5.6Z" fill="#e8503a" stroke="#c8392a" stroke-width="1"/><path d="M6.2 2.2H12.8L16.8 6.2V12.8L12.8 16.8H6.2L2.2 12.8V6.2Z" fill="none" stroke="#f08a78" stroke-width="0.8" opacity="0.8"/><path d="M6.2 6.2L12.8 12.8M12.8 6.2L6.2 12.8" stroke="#fff" stroke-width="2.6" stroke-linecap="round"/></g></svg>
<div class="t" style="left:76px;top:865.15px;font-size:14px;font-weight:400;color:#3a3a3a;letter-spacing:-0.6px;-webkit-text-stroke:0;">Save</div>
<div class="t" style="left:183px;top:865.15px;font-size:14px;font-weight:400;color:#3a3a3a;letter-spacing:-0.64px;-webkit-text-stroke:0;word-spacing:1px;">Save And Close</div>
<div class="t" style="left:352px;top:865.15px;font-size:14px;font-weight:400;color:#3a3a3a;letter-spacing:-1.0px;-webkit-text-stroke:0;">Close</div></body></html>
